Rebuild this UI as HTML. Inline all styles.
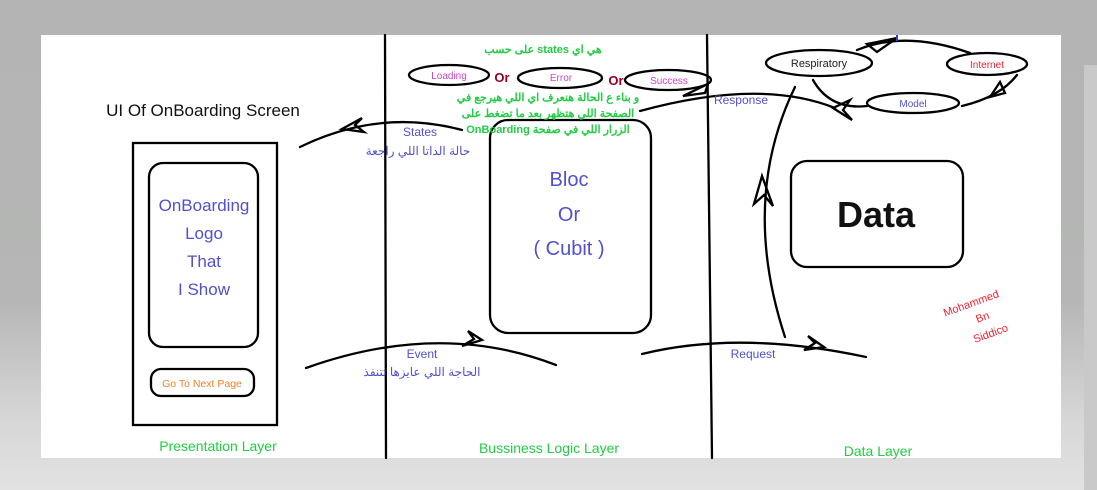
<!DOCTYPE html>
<html><head><meta charset="utf-8"><style>
html,body{margin:0;padding:0;width:1097px;height:490px;overflow:hidden;background:linear-gradient(#b3b4b3 0,#b5b6b5 300px,#d6d7d6 420px,#e2e2e2 490px);}
svg{position:absolute;left:0;top:0}
text{font-family:"Liberation Sans","Noto Sans CJK SC",sans-serif}
.r{direction:rtl;unicode-bidi:embed}
</style></head><body>
<svg width="1097" height="490" viewBox="0 0 1097 490">
<rect x="1084" y="65" width="13" height="425" fill="#c8c9c8"/>
<rect x="41" y="35" width="1020" height="423" fill="#fff"/>
<g fill="none" stroke="#000" stroke-width="2.3" stroke-linecap="round">
<path d="M385 35 L386 458"/>
<path d="M707 35 L712 458"/>
<rect x="133" y="143" width="144" height="282"/>
<rect x="149" y="163" width="109" height="184" rx="14"/>
<rect x="151" y="369" width="103" height="27" rx="10"/>
<rect x="490" y="120" width="161" height="213" rx="18"/>
<rect x="791" y="161" width="172" height="106" rx="16"/>
<ellipse cx="449" cy="75" rx="40" ry="10"/>
<ellipse cx="560" cy="78" rx="42" ry="10"/>
<ellipse cx="668" cy="80" rx="43" ry="10"/>
<ellipse cx="819" cy="63" rx="53" ry="13"/>
<ellipse cx="987" cy="64" rx="40" ry="11"/>
<ellipse cx="913" cy="103" rx="46" ry="10"/>
<path d="M300 147 Q 380 108 462 130"/>
<path d="M362 118 L342 129 L364 132 L355 125 Z"/>
<path d="M306 368 Q 440 320 556 365"/>
<path d="M468 331 L482 340 L462 346 L474 339 Z"/>
<path d="M642 354 Q 740 330 866 357"/>
<path d="M808 336 L824 347 L804 350 L815 343 Z"/>
<path d="M785 337 Q 740 200 795 87"/>
<path d="M754 204 L762 176 L773 206 L764 195 Z"/>
<path d="M835 108 Q 760 78 640 111"/>
<path d="M708 84 L683 96 L705 93 Z"/>
<path d="M857 50 Q 905 30 970 53"/>
<path d="M867 44 L897 38 L877 52 Z"/>
<path d="M1017 75 Q 1000 97 962 106"/>
<path d="M1000 82 L990 97 L1005 93 Z"/>
<path d="M867 106 Q 830 110 813 80"/>
<path d="M850 100 L833 108 L852 120 L843 110 Z"/>
</g>
<rect x="896" y="35" width="2" height="6" fill="#3344cc"/>
<g text-anchor="middle">
<text x="203" y="116" font-size="17" fill="#111">UI Of OnBoarding Screen</text>
<g fill="#5050d0" font-size="17">
<text x="204" y="211">OnBoarding</text><text x="204" y="239">Logo</text><text x="204" y="267">That</text><text x="204" y="295">I Show</text>
</g>
<text x="202" y="387" font-size="10.5" fill="#f07f2a">Go To Next Page</text>
<g fill="#5050d0" font-size="20">
<text x="569" y="186">Bloc</text><text x="569" y="221">Or</text><text x="569" y="255">( Cubit )</text>
</g>
<text x="876" y="227" font-size="36" font-weight="bold" fill="#111">Data</text>
<g fill="#22cc44" font-size="14">
<text x="218" y="451">Presentation Layer</text><text x="549" y="453">Bussiness Logic Layer</text><text x="878" y="456">Data Layer</text>
</g>
<g fill="#cc44cc" font-size="10"><text x="449" y="79">Loading</text><text x="561" y="81">Error</text><text x="669" y="84">Success</text></g>
<g fill="#990022" font-size="13" font-weight="bold"><text x="502" y="82">Or</text><text x="616" y="85">Or</text></g>
<g fill="#22cc44" font-size="11" font-weight="bold">
<text class="r" x="543" y="53">هي اي states على حسب</text>
<text class="r" x="548" y="101">و بناء ع الحالة هنعرف اي اللي هيرجع في</text>
<text class="r" x="548" y="117">الصفحة اللي هتظهر بعد ما تضغط على</text>
<text class="r" x="548" y="133">الزرار اللي في صفحة OnBoarding</text>
</g>
<g fill="#5050d0" font-size="12">
<text x="420" y="136">States</text><text class="r" x="418" y="155">حالة الداتا اللي راجعة</text>
<text x="422" y="358">Event</text><text class="r" x="422" y="376">الحاجة اللي عايزها تتنفذ</text>
<text x="753" y="358">Request</text><text x="741" y="104">Response</text>
<text x="913" y="107" font-size="10">Model</text>
</g>
<text x="819" y="67" font-size="11" fill="#222">Respiratory</text>
<text x="987" y="68" font-size="10" fill="#ee2233">Internet</text>
<g fill="#ee2233" font-size="11" transform="rotate(-20 980 322)">
<text x="978" y="305">Mohammed</text><text x="984" y="322">Bn</text><text x="986" y="340">Siddico</text>
</g>
</g>
</svg>
</body></html>
